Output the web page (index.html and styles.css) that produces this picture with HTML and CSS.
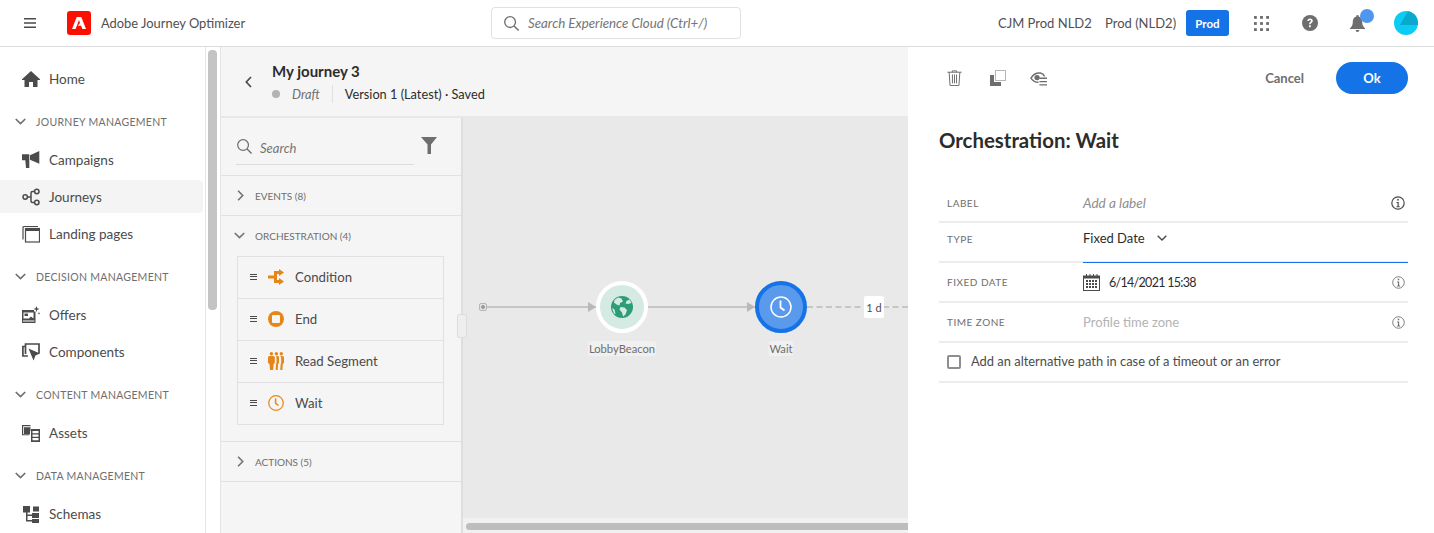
FILE: index.html
```html
<!DOCTYPE html>
<html lang="en">
<head>
<meta charset="utf-8">
<title>Adobe Journey Optimizer</title>
<link rel="stylesheet" href="styles.css">
</head>
<body>
<div class="app">
  <header class="topbar">
    <svg class="hamburger" viewBox="0 0 12 10"><path d="M0 0h12v1.600H0zM0 4.200h12v1.600H0zM0 8.400h12V10H0z"/></svg>
    <div class="logo"><svg viewBox="0 0 24 24"><path fill="#fff" d="M9.700 6h4.600L19 18h-3.600l-1.300-3.300h-3.400L13 11.900l-1-2.900L8.600 18H5z"/></svg></div>
    <div class="product">Adobe Journey Optimizer</div>
    <div class="global-search">
      <svg viewBox="0 0 18 18"><circle cx="7.500" cy="7.500" r="5.700" fill="none" stroke="#6e6e6e" stroke-width="1.400"/><path d="M11.700 11.700L16.500 16.500" stroke="#6e6e6e" stroke-width="1.600"/></svg>
      <span>Search Experience Cloud (Ctrl+/)</span>
    </div>
    <div class="top-right">
      <span class="org org-a">CJM Prod NLD2</span>
      <span class="org org-b">Prod (NLD2)</span>
      <span class="sandbox">Prod</span>
      <svg class="apps" viewBox="0 0 16 16"><g fill="#6e6e6e"><rect x="0" y="0" width="3" height="3"/><rect x="6.500" y="0" width="3" height="3"/><rect x="13" y="0" width="3" height="3"/><rect x="0" y="6.500" width="3" height="3"/><rect x="6.500" y="6.500" width="3" height="3"/><rect x="13" y="6.500" width="3" height="3"/><rect x="0" y="13" width="3" height="3"/><rect x="6.500" y="13" width="3" height="3"/><rect x="13" y="13" width="3" height="3"/></g></svg>
      <svg class="help" viewBox="0 0 16 16"><circle cx="8" cy="8" r="8" fill="#6e6e6e"/><path d="M5.300 6.100C5.400 4.500 6.500 3.500 8.100 3.500c1.600 0 2.700 1 2.700 2.300 0 1.100-.6 1.600-1.300 2.100-.6.400-.8.700-.8 1.400H7.100c0-1.200.4-1.800 1.100-2.300.5-.4.800-.6.800-1.100 0-.5-.4-.8-.9-.8-.6 0-1 .4-1.100 1z" fill="#fff"/><rect x="7" y="10.300" width="1.800" height="1.900" fill="#fff"/></svg>
      <div class="bell">
        <svg viewBox="0 0 16 18"><path fill="#6e6e6e" d="M8 0a1.300 1.300 0 0 1 1.300 1.400C12 2 13 4.300 13 7c0 3.500 1 5 3 7v.8H0V14c2-2 3-3.500 3-7 0-2.700 1-5 3.700-5.600A1.300 1.300 0 0 1 8 0zM6 16h4a2 2 0 0 1-4 0z"/></svg>
        <span class="bell-dot"></span>
      </div>
      <svg class="avatar" viewBox="0 0 24 24"><circle cx="12" cy="12" r="12" fill="#0ccbf5"/><path d="M6 14L14 .2A12 12 0 0 1 23.800 14z" fill="#08a9cd"/></svg>
    </div>
  </header>

  <div class="workspace">
    <nav class="sidenav">
      <a class="nav-item"><svg viewBox="0 0 18 16"><path fill="#4b4b4b" d="M9 0L18 8.300V9h-2.500v7H11v-5H7v5H2.500V9H0v-.7z"/></svg><span>Home</span></a>
      <div class="nav-heading"><svg viewBox="0 0 10 6"><path d="M.7.700L5 5 9.300.7" fill="none" stroke="#6e6e6e" stroke-width="1.500"/></svg><span>JOURNEY MANAGEMENT</span></div>
      <a class="nav-item"><svg viewBox="0 0 18 18"><path fill="#4b4b4b" d="M8 4.300L17.300 0v12.700L8 8.700zM0 3.300h7.300v6H7.300V17H4L3.300 9.300H0z"/></svg><span>Campaigns</span></a>
      <a class="nav-item active"><svg viewBox="0 0 18 18"><g fill="none" stroke="#4b4b4b" stroke-width="1.500"><circle cx="3.200" cy="9" r="2.200"/><circle cx="14.800" cy="3.500" r="2.200"/><circle cx="14.800" cy="14.500" r="2.200"/><path d="M5.500 9h3.500M12.500 3.500H10.500a1.500 1.500 0 0 0-1.500 1.500v8a1.500 1.500 0 0 0 1.500 1.500h2"/></g></svg><span>Journeys</span></a>
      <a class="nav-item"><svg viewBox="0 0 18 18"><g fill="none" stroke="#4b4b4b" stroke-width="1.200"><path d="M1 14.500V2.500a1 1 0 0 1 1-1h14"/><rect x="3.500" y="3.500" width="14" height="13.500"/></g><path fill="#4b4b4b" d="M3 3h15v3H3z"/></svg><span>Landing pages</span></a>
      <div class="nav-heading"><svg viewBox="0 0 10 6"><path d="M.7.700L5 5 9.300.7" fill="none" stroke="#6e6e6e" stroke-width="1.500"/></svg><span>DECISION MANAGEMENT</span></div>
      <a class="nav-item"><svg viewBox="0 0 18 18"><path fill="#4b4b4b" fill-rule="evenodd" d="M0 4h12v1.500h1.500V17H0zM1.500 6.500v6h5.500l2-2 2.500 2v-6zM2.500 7.500H6V10H2.500zM.9 14.500v1h11.500v-1zM14.500 0l.8 2.200 2.200.8-2.200.8-.8 2.200-.8-2.200-2.200-.8 2.200-.8zM17 6l.4 1 1 .4-1 .4-.4 1-.4-1-1-.4 1-.4z"/></svg><span>Offers</span></a>
      <a class="nav-item"><svg viewBox="0 0 18 18"><g fill="none" stroke="#4b4b4b" stroke-width="1.700"><path d="M3.500 3.500H.9V13h5"/><path d="M3.500 11V1H17v9.500"/></g><path fill="#4b4b4b" d="M6.500 5.500L18 10.500l-4.500 2-2 5z"/></svg><span>Components</span></a>
      <div class="nav-heading"><svg viewBox="0 0 10 6"><path d="M.7.700L5 5 9.300.7" fill="none" stroke="#6e6e6e" stroke-width="1.500"/></svg><span>CONTENT MANAGEMENT</span></div>
      <a class="nav-item"><svg viewBox="0 0 18 18"><path fill="#4b4b4b" fill-rule="evenodd" d="M0 1h8.500v1.200H1.200v8H7v1H0zM2 3.200h6.500V7H8v3.500H2zM9 5h9v13H9zM10.500 7v2.200h6V7zM10.500 10.500v2.200h6v-2.200zM10.500 14v2.200h6V14z"/></svg><span>Assets</span></a>
      <div class="nav-heading"><svg viewBox="0 0 10 6"><path d="M.7.700L5 5 9.300.7" fill="none" stroke="#6e6e6e" stroke-width="1.500"/></svg><span>DATA MANAGEMENT</span></div>
      <a class="nav-item"><svg viewBox="0 0 18 18"><path fill="#4b4b4b" d="M1 1h7v6.500H5.500v2H10V8h7v5h-7v-2H5.500v4H10v-1h7v4.500h-7V16.500H4V7.500H1zM11 1.500h6v5h-6z"/></svg><span>Schemas</span></a>
    </nav>
    <div class="nav-scroll"><div class="nav-thumb"></div></div>

    <main class="journey">
      <div class="journey-head">
        <svg class="back" viewBox="0 0 7 12"><path d="M6 1L1.300 6 6 11" fill="none" stroke="#4b4b4b" stroke-width="1.700"/></svg>
        <div class="journey-meta">
          <div class="journey-name">My journey 3</div>
          <div class="journey-status"><i class="status-dot"></i><em>Draft</em><span class="version">Version 1 (Latest) · Saved</span></div>
        </div>
      </div>
      <div class="journey-body">
        <aside class="palette">
          <div class="palette-search">
            <div class="palette-input">
              <svg viewBox="0 0 18 18"><circle cx="7.500" cy="7.500" r="5.700" fill="none" stroke="#6e6e6e" stroke-width="1.300"/><path d="M11.700 11.700L16.500 16.500" stroke="#6e6e6e" stroke-width="1.500"/></svg>
              <span>Search</span>
            </div>
            <svg class="filter" viewBox="0 0 16 17"><path fill="#6e6e6e" d="M0 0h16L10 7.500V17H6.500V7.500z"/></svg>
          </div>
          <div class="group"><svg viewBox="0 0 6 10"><path d="M.8.700L5 5 .8 9.300" fill="none" stroke="#747474" stroke-width="1.500"/></svg><span>EVENTS (8)</span></div>
          <div class="group-open">
            <div class="group group-title"><svg class="down" viewBox="0 0 10 6"><path d="M.7.700L5 5 9.300.7" fill="none" stroke="#747474" stroke-width="1.500"/></svg><span>ORCHESTRATION (4)</span></div>
            <ul class="activities">
              <li><span class="grip"></span><svg viewBox="0 0 16 16"><path fill="#e68619" d="M0 6.500h6V2h5V0l5 3.500L11 7V5H9v6h2V9l5 3.500L11 16v-2H6V9.500H0z"/></svg><span>Condition</span></li>
              <li><span class="grip"></span><svg viewBox="0 0 16 16"><circle cx="8" cy="8" r="8" fill="#e68619"/><rect x="4" y="4" width="8" height="8" rx="1" fill="#f5f5f5"/></svg><span>End</span></li>
              <li><span class="grip"></span><svg class="people" viewBox="0 0 16 18"><g fill="#e68619"><circle cx="3.400" cy="1.700" r="1.700"/><circle cx="8.400" cy="1.700" r="1.700"/><circle cx="13.300" cy="1.700" r="1.700"/><path d="M0 5.500Q0 4 1.500 4h3.800Q6.800 4 6.800 5.500V11l-1.200 1-.4 6H2l-.5-6L0 11zM8 4h2q1 0 1 1.500V11l-.9 1-.4 6H7.700l.4-6 .4-1V5.500zM12.300 4h2.200q1.500 0 1.500 1.500V11l-1.200 1-.4 6h-2.200l.5-6 .5-1V5.500z"/></g></svg><span>Read Segment</span></li>
              <li><span class="grip"></span><svg viewBox="0 0 16 16"><circle cx="8" cy="8" r="7.300" fill="none" stroke="#e68619" stroke-width="1.200"/><path d="M7.600 3.500v4.800l3 2.200" fill="none" stroke="#e68619" stroke-width="1.500"/></svg><span>Wait</span></li>
            </ul>
          </div>
          <div class="group"><svg viewBox="0 0 6 10"><path d="M.8.700L5 5 .8 9.300" fill="none" stroke="#747474" stroke-width="1.500"/></svg><span>ACTIONS (5)</span></div>
        </aside>
        <section class="canvas">
          <div class="splitter"></div>
          <span class="start-dot"></span>
          <span class="link link-a"></span>
          <span class="link link-b"></span>
          <span class="link-dash"></span>
          <div class="node node-event">
            <svg viewBox="0 0 22 22"><circle cx="11" cy="11" r="11" fill="#2d9d78"/><path fill="#d5eae2" d="M7 1.500l3.500 1 1.500 3-3 1.500-.5 2.500-3-1L3 6.500 3.500 4zM18.500 3.500l-3 1.500-1 2.500 2.500.5 3.500-1zM9.500 11l4 .5 2.500 2.500-1.500 4.500-2.500 2-1-4-2.500-3zM1 12l2.500 1.500L4.500 18l-1.500-.5z"/></svg>
          </div>
          <div class="node-label label-event">LobbyBeacon</div>
          <div class="node node-wait">
            <svg viewBox="0 0 22 22"><circle cx="11" cy="11" r="10" fill="none" stroke="#fff" stroke-width="1.500"/><path d="M10.500 4.500v7l4 3" fill="none" stroke="#fff" stroke-width="1.800"/></svg>
          </div>
          <div class="node-label label-wait">Wait</div>
          <div class="delay">1 d</div>
          <div class="canvas-scroll"><div class="canvas-thumb"></div></div>
        </section>
      </div>
    </main>

    <aside class="inspector">
      <div class="inspector-bar">
        <svg class="tool" viewBox="0 0 16 18"><g fill="none" stroke="#6e6e6e" stroke-width="1.100"><path d="M0 2.500h16M5.500 2.500V1h5v1.500M2 2.500l1 15h10l1-15"/><path d="M5.700 5v10M8 5v10M10.300 5v10"/></g></svg>
        <svg class="tool tool-copy" viewBox="0 0 16 16"><path fill="#6e6e6e" d="M0 5h4v7h7v4H0z"/><rect x="5.500" y=".5" width="10" height="10" fill="none" stroke="#6e6e6e" stroke-dasharray="1 1"/></svg>
        <svg class="tool tool-eye" viewBox="0 0 18 16"><path fill="none" stroke="#6e6e6e" stroke-width="1.500" d="M9 11.500C5.500 11.500 3 10 1 7 3.500 3 7 1.200 11 1.700c2 .3 3.500 1.500 4.500 3.500"/><circle cx="7.500" cy="6.500" r="2.800" fill="#6e6e6e"/><path fill="#6e6e6e" d="M10 6.500h8V8h-8zM10 10h8v1.500h-8zM10 13.500h8V15h-8z"/></svg>
        <span class="cancel">Cancel</span>
        <span class="ok">Ok</span>
      </div>
      <h1 class="inspector-title">Orchestration: Wait</h1>
      <div class="form">
        <div class="row row-label">
          <span class="field">LABEL</span><em class="placeholder">Add a label</em>
          <svg class="info info-dark" viewBox="0 0 14 14"><circle cx="7" cy="7" r="6.200" fill="none" stroke="#4b4b4b" stroke-width="1.200"/><rect x="6.200" y="2.900" width="1.600" height="1.700" fill="#4b4b4b"/><path d="M5.500 6h2.200v4.300h1v.9H5.500v-.9h1V6.900h-1z" fill="#4b4b4b"/></svg>
        </div>
        <div class="row row-type">
          <span class="field">TYPE</span>
          <div class="select"><span>Fixed Date</span><svg viewBox="0 0 10 6"><path d="M.7.700L5 5 9.300.7" fill="none" stroke="#4b4b4b" stroke-width="1.400"/></svg></div>
        </div>
        <div class="row">
          <span class="field">FIXED DATE</span>
          <div class="date">
            <svg viewBox="0 0 17 17"><path fill="#4b4b4b" d="M0 1.500h3V0h1v1.500h2.500V0h1v1.500H10V0h1v1.500h2.500V0h1v1.500H17V17H0zM1 4.500V16h15V4.500z"/><g fill="#4b4b4b"><rect x="3" y="6" width="2" height="2"/><rect x="6" y="6" width="2" height="2"/><rect x="9" y="6" width="2" height="2"/><rect x="12" y="6" width="2" height="2"/><rect x="3" y="9" width="2" height="2"/><rect x="6" y="9" width="2" height="2"/><rect x="9" y="9" width="2" height="2"/><rect x="12" y="9" width="2" height="2"/><rect x="3" y="12" width="2" height="2"/><rect x="6" y="12" width="2" height="2"/><rect x="9" y="12" width="2" height="2"/><rect x="12" y="12" width="2" height="2"/></g></svg>
            <span>6/14/2021 15:38</span>
          </div>
          <svg class="info" viewBox="0 0 14 14"><circle cx="7" cy="7" r="6.200" fill="none" stroke="#747474" stroke-width="1"/><rect x="6.200" y="2.900" width="1.600" height="1.700" fill="#6e6e6e"/><path d="M5.500 6h2.200v4.300h1v.9H5.500v-.9h1V6.900h-1z" fill="#6e6e6e"/></svg>
        </div>
        <div class="row">
          <span class="field">TIME ZONE</span><span class="muted">Profile time zone</span>
          <svg class="info" viewBox="0 0 14 14"><circle cx="7" cy="7" r="6.200" fill="none" stroke="#747474" stroke-width="1"/><rect x="6.200" y="2.900" width="1.600" height="1.700" fill="#6e6e6e"/><path d="M5.500 6h2.200v4.300h1v.9H5.500v-.9h1V6.900h-1z" fill="#6e6e6e"/></svg>
        </div>
        <label class="row row-check"><span class="checkbox"></span><span class="check-text">Add an alternative path in case of a timeout or an error</span></label>
      </div>
    </aside>
  </div>
</div>
</body>
</html>
```

FILE: styles.css
```css
* { box-sizing: border-box; }
html, body { margin: 0; height: 100%; overflow: hidden; }
body { font-family: "Lato", "Liberation Sans", sans-serif; font-size: 14px; color: #4b4b4b; background: #fff; }
svg { display: block; flex: none; }
.app { height: 100vh; display: flex; flex-direction: column; }

/* top bar */
.topbar { height: 47px; flex: none; display: flex; align-items: center; border-bottom: 1px solid #dcdcdc; background: #fff; padding-left: 24px; white-space: nowrap; }
.hamburger { width: 12px; height: 10px; fill: #4b4b4b; }
.logo { width: 24px; height: 24px; margin-left: 31px; background: #fa0f00; border-radius: 3px; }
.logo svg { width: 24px; height: 24px; }
.product { width: 390px; margin-left: 10px; font-size: 12.9px; color: #505050; }
.global-search { width: 250px; height: 32px; display: flex; align-items: center; gap: 8px; padding-left: 11px; border: 1px solid #e1e1e1; border-radius: 4px; font-style: italic; font-size: 13.3px; color: #747474; }
.global-search svg { width: 17px; height: 17px; }
.top-right { flex: 1; display: flex; align-items: center; padding-left: 257px; }
.org { font-size: 13px; color: #505050; }
.org-a { width: 89px; }
.org-b { width: 71px; margin-left: 18px; }
.sandbox { width: 43px; height: 26px; margin-left: 10px; border-radius: 3px; background: #1473e6; color: #fff; font-size: 11.5px; font-weight: 700; display: flex; align-items: center; justify-content: center; }
.apps { width: 15px; height: 15px; margin-left: 25px; }
.help { width: 16px; height: 16px; margin-left: 33px; }
.bell { position: relative; width: 15px; height: 17px; margin-left: 32px; }
.bell svg { width: 15px; height: 17px; }
.bell-dot { position: absolute; left: 10px; top: -6px; width: 14px; height: 14px; border-radius: 50%; background: #4f97ee; }
.avatar { width: 24px; height: 24px; margin-left: 29px; }

.workspace { flex: 1; min-height: 0; display: flex; }

/* side nav */
.sidenav { width: 206px; flex: none; padding-top: 13px; border-right: 1px solid #e4e4e4; overflow: hidden; }
.nav-item { height: 37px; display: flex; align-items: center; gap: 9px; padding-left: 22px; position: relative; font-size: 13.5px; color: #4b4b4b; }
.nav-item svg { width: 18px; height: 18px; position: relative; }
.nav-item span { position: relative; }
.active::before { content: ""; position: absolute; left: 0; right: 2px; top: 2px; bottom: 2px; background: #f4f4f4; border-radius: 0 4px 4px 0; }
.nav-heading { height: 39px; margin-top: 5px; display: flex; align-items: center; gap: 10px; padding-left: 15px; font-size: 10.5px; letter-spacing: .3px; color: #6e6e6e; }
.nav-heading svg { width: 11px; height: 7px; }
.nav-scroll { width: 14px; flex: none; padding: 3px 3px 0 2px; }
.nav-thumb { height: 260px; border-radius: 4px; background: #c4c4c4; }

/* journey */
.journey { width: 688px; flex: none; display: flex; flex-direction: column; border-left: 1px solid #e4e4e4; }
.journey-head { height: 71px; flex: none; display: flex; align-items: center; background: #f5f5f5; border-bottom: 2px solid #e8e8e8; padding-left: 24px; }
.back { width: 7px; height: 12px; }
.journey-meta { margin-left: 20px; }
.journey-name { font-size: 15px; font-weight: 700; color: #2c2c2c; line-height: 20px; }
.journey-status { display: flex; align-items: center; margin-top: 4px; font-size: 12.75px; color: #2c2c2c; line-height: 18px; }
.status-dot { width: 8px; height: 8px; border-radius: 50%; background: #b3b3b3; }
.journey-status em { margin-left: 12px; color: #6e6e6e; padding-right: 12px; border-right: 1px solid #e1e1e1; }
.version { margin-left: 12px; }
.journey-body { flex: 1; min-height: 0; display: flex; }

/* palette */
.palette { width: 242px; flex: none; background: #f5f5f5; border-right: 2px solid #dedede; }
.palette-search { height: 58px; display: flex; padding: 15px 0 0 15px; border-bottom: 1px solid #e1e1e1; }
.palette-input { width: 178px; height: 32px; display: flex; align-items: center; gap: 7px; border-bottom: 1px solid #dcdcdc; font-style: italic; font-size: 13px; color: #747474; padding-top: 2px; padding-bottom: 3px; }
.palette-input svg { width: 17px; height: 17px; margin-top: -4px; }
.filter { width: 16px; height: 17px; margin: 4px 0 0 7px; }
.group { height: 40px; display: flex; align-items: center; gap: 11px; padding-left: 16px; border-bottom: 1px solid #e1e1e1; font-size: 10px; color: #6e6e6e; }
.group svg { width: 7px; height: 11px; }
.group .down { width: 11px; height: 7px; margin-left: -3px; margin-right: -1px; }
.group-title { border-bottom: 0; padding-bottom: 1px; }
.group-open { height: 226px; border-bottom: 1px solid #e1e1e1; }
.activities { list-style: none; margin: 0 0 0 16px; padding: 0; width: 207px; border: 1px solid #e1e1e1; border-bottom: 0; }
.activities li { height: 42px; display: flex; align-items: center; padding: 0 0 2px 12px; border-bottom: 1px solid #e1e1e1; font-size: 13.2px; color: #4b4b4b; }
.activities svg { width: 16px; height: 16px; margin-left: 11px; margin-right: 11px; }
.activities .people { height: 18px; }
.grip { width: 7px; height: 6px; border-top: 1px solid #4b4b4b; border-bottom: 1px solid #4b4b4b; position: relative; }
.grip::after { content: ""; position: absolute; left: 0; right: 0; top: 1.500px; height: 1px; background: #4b4b4b; }

/* canvas */
.canvas { flex: 1; position: relative; background: #e9e9e9; }
.splitter { position: absolute; left: -6px; top: 196px; width: 10px; height: 24px; background: #eeeeee; border: 1px solid #dddddd; border-radius: 2px; }
.start-dot { position: absolute; left: 16px; top: 185px; width: 8px; height: 8px; border-radius: 2px; border: 1px solid #b5b5b5; background: radial-gradient(circle, #9c9c9c 0 1.600px, #e3e3e3 2.200px); }
.link { position: absolute; top: 188px; height: 2px; background: #c6c6c6; }
.link::after { content: ""; position: absolute; right: 0; top: -4px; border-left: 8px solid #b9b9b9; border-top: 5px solid transparent; border-bottom: 5px solid transparent; }
.link-a { left: 24px; width: 109px; }
.link-b { left: 185px; width: 107px; }
.link-dash { position: absolute; left: 344px; right: 0; top: 188px; border-top: 2px dashed #c6c6c6; }
.node { position: absolute; top: 163px; width: 52px; height: 52px; border-radius: 50%; display: flex; align-items: center; justify-content: center; }
.node svg { width: 22px; height: 22px; }
.node-event { left: 133px; background: #d5eae2; border: 4px solid #fff; }
.node-wait { left: 292px; background: #5a9aec; border: 4px solid #1473e6; }
.node-label { position: absolute; top: 223px; transform: translateX(-50%); padding: 0 1px; background: #f0f0f0; border-radius: 3px; font-size: 11.2px; line-height: 15px; color: #6e6e6e; }
.label-event { left: 159px; }
.label-wait { left: 318px; }
.delay { position: absolute; left: 401px; top: 178px; width: 20px; height: 22px; background: #fff; border-radius: 2px; display: flex; align-items: center; justify-content: center; font-size: 11px; color: #4b4b4b; }
.canvas-scroll { position: absolute; left: 0; right: 0; bottom: 0; height: 15px; padding: 5px 0 3px 3px; background: #f1f1f1; }
.canvas-thumb { height: 7px; border-radius: 4px 0 0 4px; background: #bdbdbd; }

/* inspector */
.inspector { flex: 1; min-width: 0; background: #fff; padding: 0 26px 0 31px; }
.inspector-bar { height: 47px; padding-top: 15px; display: flex; align-items: center; }
.tool { width: 15px; height: 16px; margin-left: 8px; }
.tool-copy { width: 16px; margin-left: 28px; }
.tool-eye { width: 17px; margin-left: 24px; margin-top: 2px; }
.cancel { margin-left: auto; font-size: 13px; font-weight: 700; color: #6e6e6e; }
.ok { width: 72px; height: 32px; margin-left: 32px; border-radius: 16px; background: #1473e6; color: #fff; font-size: 13px; font-weight: 700; display: flex; align-items: center; justify-content: center; }
.inspector-title { margin: 33px 0 0; font-size: 20.4px; line-height: 26px; font-weight: 700; color: #2c2c2c; }
.form { margin-top: 30px; }
.row { height: 40px; display: flex; align-items: center; padding: 0 3px 0 8px; border-bottom: 2px solid #ececec; font-size: 13px; color: #2c2c2c; }
.row-label { padding-top: 2px; }
.field { width: 136px; flex: none; font-size: 10px; letter-spacing: .5px; color: #6e6e6e; }
.row-type { align-items: flex-start; padding-top: 7px; padding-right: 0; position: relative; }
.row-type::after { content: ""; position: absolute; left: 144px; right: 0; bottom: -2px; height: 1px; background: #1473e6; }
.row-type .field { margin-top: 3px; }
.placeholder { color: #8e8e8e; font-size: 13.6px; }
.select { display: flex; align-items: center; gap: 12px; }
.select svg { width: 10px; height: 6px; }
.date { display: flex; align-items: center; gap: 9px; font-size: 12.5px; letter-spacing: -.7px; }
.date svg { width: 17px; height: 17px; }
.muted { color: #b3b3b3; }
.info { width: 13px; height: 13px; margin-left: auto; }
.info-dark { width: 14px; height: 14px; }
.row-check { color: #4b4b4b; gap: 10px; }
.check-text { font-size: 12.9px; margin-top: -2px; }
.checkbox { width: 14px; height: 14px; border: 2px solid #8e8e8e; border-radius: 2px; }
```
